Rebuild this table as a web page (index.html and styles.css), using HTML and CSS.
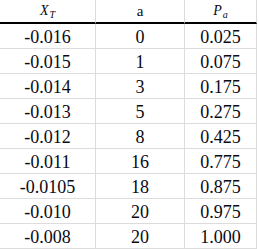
FILE: index.html
```html
<!DOCTYPE html>
<html>
<head>
<meta charset="utf-8">
<link rel="stylesheet" href="styles.css">
</head>
<body>
<div class="sheet">
  <div class="cell head"><span class="math"><i>X</i><sub><i>T</i></sub></span></div>
  <div class="cell head"><span class="math upright">a</span></div>
  <div class="cell head"><span class="math"><i>P</i><sub><i>a</i></sub></span></div>

  <div class="cell">-0.016</div><div class="cell">0</div><div class="cell">0.025</div>
  <div class="cell">-0.015</div><div class="cell">1</div><div class="cell">0.075</div>
  <div class="cell">-0.014</div><div class="cell">3</div><div class="cell">0.175</div>
  <div class="cell">-0.013</div><div class="cell">5</div><div class="cell">0.275</div>
  <div class="cell">-0.012</div><div class="cell">8</div><div class="cell">0.425</div>
  <div class="cell">-0.011</div><div class="cell">16</div><div class="cell">0.775</div>
  <div class="cell">-0.0105</div><div class="cell">18</div><div class="cell">0.875</div>
  <div class="cell">-0.010</div><div class="cell">20</div><div class="cell">0.975</div>
  <div class="cell">-0.008</div><div class="cell">20</div><div class="cell">1.000</div>
</div>
</body>
</html>
```

FILE: styles.css
```css
html, body {
  margin: 0;
  padding: 0;
  background: #ffffff;
}

.sheet {
  display: grid;
  grid-template-columns: 96px 89px 72px;
  grid-auto-rows: 25px;
  grid-template-rows: 24px;
  width: 257px;
  font-family: "Times New Roman", "Liberation Serif", serif;
  font-size: 18px;
  color: #0a0a14;
}

.cell {
  box-sizing: border-box;
  border-right: 1px solid #dcdcdc;
  border-bottom: 1px solid #dcdcdc;
  display: flex;
  align-items: center;
  justify-content: center;
  line-height: 20px;
  padding-top: 1px;
}

.head {
  border-bottom: 2px solid #000000;
  align-items: flex-end;
  padding-top: 0;
  padding-bottom: 3px;
  font-size: 14px;
  line-height: 16px;
}

.math i {
  font-style: italic;
}

.upright {
  font-size: 15px;
}

.math sub {
  font-size: 10px;
  vertical-align: -3px;
  line-height: 0;
  margin-left: 1px;
}
```
